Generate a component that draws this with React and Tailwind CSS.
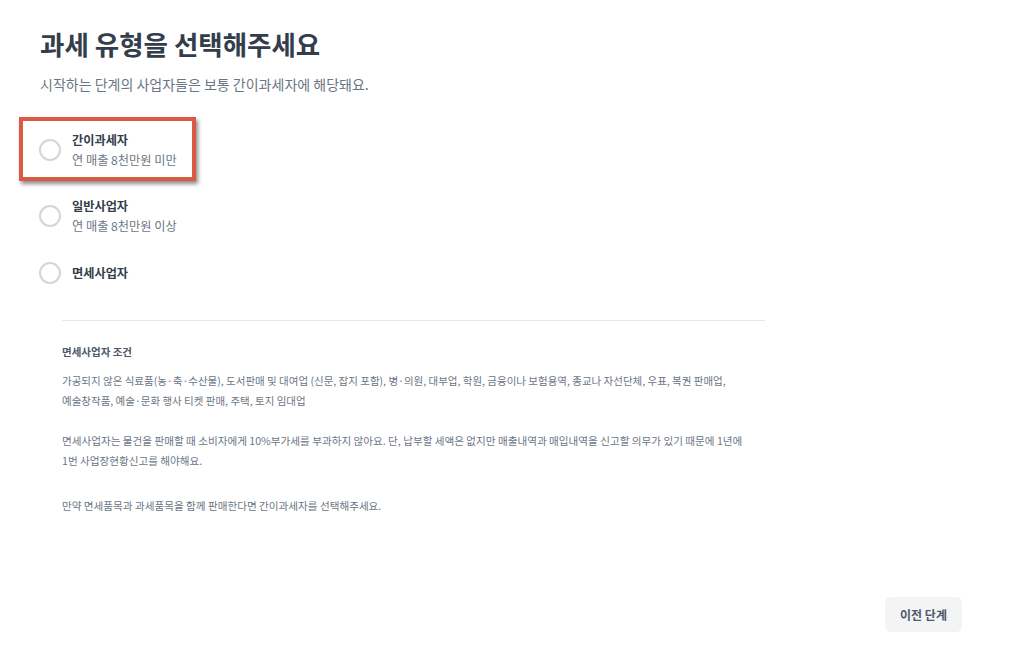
const options = [
  { title: '간이과세자', desc: '연 매출 8천만원 미만' },
  { title: '일반사업자', desc: '연 매출 8천만원 이상' },
  { title: '면세사업자', desc: null },
];

const Radio = () => (
  <div className="w-[22px] h-[22px] shrink-0 rounded-full border-2 border-[#d1d6db] bg-white" />
);

export default function App() {
  return (
    <div
      className="relative w-[1024px] h-[671px] overflow-hidden bg-white text-[#333d4b]"
      style={{ fontFamily: '"Noto Sans CJK KR", "Noto Sans", sans-serif' }}
    >
      <div className="pl-[40px] pt-[28px]">
        <h1 className="text-[26.5px] leading-[32px] font-bold text-[#333d4b]">
          과세 유형을 선택해주세요
        </h1>
        <p className="mt-[14px] text-[14px] leading-[20px] text-[#6b7684]">
          시작하는 단계의 사업자들은 보통 간이과세자에 해당돼요.
        </p>

        {/* Options */}
        <div className="mt-[36px] flex flex-col gap-[26px]">
          {options.map((o) => (
            <div key={o.title} className="flex items-center gap-[11px] ml-[-1px]">
              <Radio />
              <div className="flex flex-col">
                <span className="text-[12.2px] leading-[20px] font-bold text-[#333d4b]">{o.title}</span>
                {o.desc && (
                  <span className="text-[12.2px] leading-[20px] text-[#6b7684]">{o.desc}</span>
                )}
              </div>
            </div>
          ))}
        </div>

        {/* Info */}
        <div className="ml-[22px] w-[703px]">
          <div className="mt-[36px] h-px bg-[#e5e8eb]" />
          <h2 className="mt-[21px] text-[10.5px] leading-[20px] font-bold text-[#4e5968]">
            면세사업자 조건
          </h2>
          <p className="mt-[9px] text-[10.5px] leading-[20px] text-[#6b7684] whitespace-nowrap">
            가공되지 않은 식료품(농·축·수산물), 도서판매 및 대여업 (신문, 잡지 포함), 병·의원, 대부업, 학원, 금융이나 보험용역, 종교나 자선단체, 우표, 복권 판매업,
            <br />
            예술창작품, 예술·문화 행사 티켓 판매, 주택, 토지 임대업
          </p>
          <p className="mt-[20px] text-[10.6px] leading-[20px] text-[#6b7684] whitespace-nowrap">
            면세사업자는 물건을 판매할 때 소비자에게 10%부가세를 부과하지 않아요. 단, 납부할 세액은 없지만 매출내역과 매입내역을 신고할 의무가 있기 때문에 1년에
            <br />
            1번 사업장현황신고를 해야해요.
          </p>
          <p className="mt-[25px] text-[10.6px] leading-[20px] text-[#6b7684] whitespace-nowrap">
            만약 면세품목과 과세품목을 함께 판매한다면 간이과세자를 선택해주세요.
          </p>
        </div>
      </div>

      <div className="flex justify-end pr-[62px] mt-[81px]">
        <button className="w-[77px] h-[35px] rounded-[6px] bg-[#f2f4f6] text-[12px] font-bold text-[#4e5968]">
          이전 단계
        </button>
      </div>

      {/* highlight annotation */}
      <div className="absolute left-[19px] top-[117px] w-[177px] h-[64px] border-[4px] border-[#d95b43] shadow-[2px_3px_4px_rgba(0,0,0,0.45)] pointer-events-none" />
    </div>
  );
}
